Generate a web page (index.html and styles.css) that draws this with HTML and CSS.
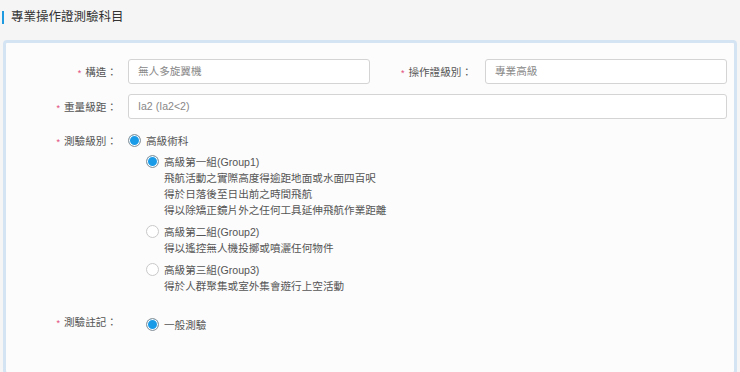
FILE: index.html
```html
<!DOCTYPE html>
<html lang="zh-Hant">
<head>
    <meta charset="UTF-8">
    <title>專業操作證測驗科目</title>
    <link rel="stylesheet" href="styles.css">
</head>
<body>
    <div class="section-title">專業操作證測驗科目</div>

    <div class="card">
        <div class="row row-two">
            <label class="field-label"><span class="req">*</span>構造：</label>
            <div class="input">無人多旋翼機</div>
            <label class="field-label"><span class="req">*</span>操作證級別：</label>
            <div class="input">專業高級</div>
        </div>

        <div class="row row-one">
            <label class="field-label"><span class="req">*</span>重量級距：</label>
            <div class="input">Ia2 (Ia2&lt;2)</div>
        </div>

        <div class="row row-one row-level">
            <label class="field-label"><span class="req">*</span>測驗級別：</label>
            <div class="options">
                <div class="option">
                    <span class="radio checked"></span>
                    <span>高級術科</span>
                </div>
                <div class="sub-options">
                    <div class="option">
                        <span class="radio checked"></span>
                        <div class="option-text">
                            <div>高級第一組(Group1)</div>
                            <div>飛航活動之實際高度得逾距地面或水面四百呎</div>
                            <div>得於日落後至日出前之時間飛航</div>
                            <div>得以除矯正鏡片外之任何工具延伸飛航作業距離</div>
                        </div>
                    </div>
                    <div class="option">
                        <span class="radio"></span>
                        <div class="option-text">
                            <div>高級第二組(Group2)</div>
                            <div>得以遙控無人機投擲或噴灑任何物件</div>
                        </div>
                    </div>
                    <div class="option">
                        <span class="radio"></span>
                        <div class="option-text">
                            <div>高級第三組(Group3)</div>
                            <div>得於人群聚集或室外集會遊行上空活動</div>
                        </div>
                    </div>
                </div>
            </div>
        </div>

        <div class="row row-one row-note">
            <label class="field-label"><span class="req">*</span>測驗註記：</label>
            <div class="sub-options">
                <div class="option">
                    <span class="radio checked"></span>
                    <span>一般測驗</span>
                </div>
            </div>
        </div>
    </div>
</body>
</html>
```

FILE: styles.css
```css
body {
    margin: 0;
    background-color: #f5f5f5;
    font-family: "Liberation Sans", "Noto Sans CJK TC", sans-serif;
    font-size: 10.6px;
    color: #555;
}

.section-title {
    margin: 11px 0 0 2px;
    padding-left: 7px;
    border-left: 2px solid #1e9be0;
    font-size: 12.5px;
    line-height: 13px;
    color: #333;
}

.card {
    margin: 16px 3px 0 3px;
    padding: 16px 7px 30px 0;
    min-height: 280px;
    background-color: #fcfcfc;
    border: 3px solid #d5e4f3;
    border-radius: 4px;
}

.row {
    display: grid;
    align-items: center;
    margin-bottom: 10px;
}

.row-two {
    grid-template-columns: 122px 1fr 115px 1fr;
}

.row-one {
    grid-template-columns: 122px 1fr;
}

.field-label {
    text-align: right;
    padding-right: 11px;
    color: #555;
}

.row-two .field-label:nth-of-type(2) {
    padding-right: 13px;
}

.req {
    color: #e2487a;
    margin-right: 4px;
    font-size: 9px;
}

.input {
    height: 23px;
    line-height: 23px;
    padding: 0 9px;
    background-color: #fff;
    border: 1px solid #d4d4d4;
    border-radius: 3px;
    color: #888;
}

.row-level {
    align-items: start;
    margin-top: 14px;
}

.row-level .field-label {
    line-height: 16px;
}

.options {
    line-height: 16px;
}

.option {
    display: flex;
    align-items: flex-start;
    gap: 5px;
}

.sub-options {
    padding-left: 18px;
}

.sub-options .option {
    margin-top: 5px;
}

.sub-options .option + .option {
    margin-top: 6px;
}

.option-text {
    line-height: 16px;
}

.radio {
    box-sizing: border-box;
    flex: none;
    width: 13px;
    height: 13px;
    margin-top: 1px;
    border: 1px solid #c9c9c9;
    border-radius: 50%;
    background-color: #fff;
}

.radio.checked {
    background-color: #1a9be8;
    box-shadow: inset 0 0 0 1px #fff;
    border-color: #9a9a9a;
}

.row-note {
    align-items: start;
    margin-top: 20px;
}

.row-note .field-label {
    line-height: 16px;
}

.row-note .sub-options .option {
    margin-top: 3px;
}
```
